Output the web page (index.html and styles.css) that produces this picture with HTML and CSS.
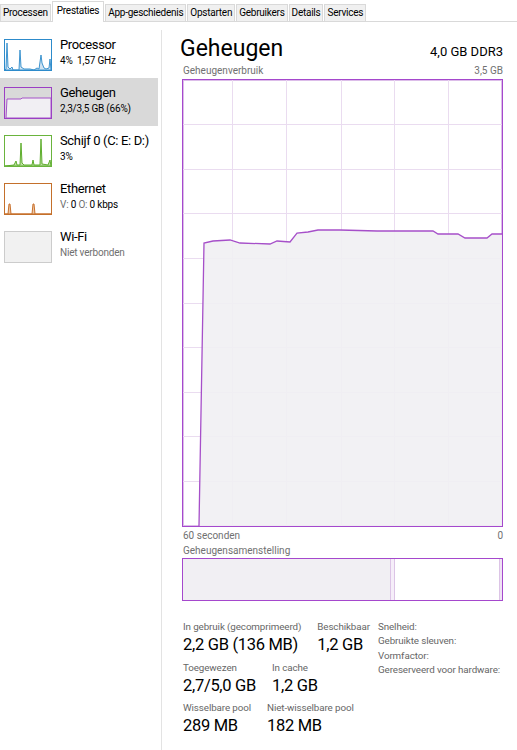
FILE: index.html
```html
<!DOCTYPE html>
<html lang="nl">
<head>
    <meta charset="UTF-8">
    <title>Taakbeheer - Prestaties</title>
    <link rel="stylesheet" href="styles.css">
</head>
<body>
    <div class="tabs">
        <div class="tab">Processen</div>
        <div class="tab active">Prestaties</div>
        <div class="tab">App-geschiedenis</div>
        <div class="tab">Opstarten</div>
        <div class="tab">Gebruikers</div>
        <div class="tab">Details</div>
        <div class="tab">Services</div>
    </div>

    <div class="main">
        <!-- resource list -->
        <div class="sidebar">
            <div class="item">
                <svg class="thumb" viewBox="0 0 48 32">
                    <path d="M1 31 L2 30 L3 4 L4 28 L6 30 L8 28 L9 31 L15 31 L16 11 L17 28 L20 30 L26 30 L30 31 L33 29 L35 30 L37 16 L38 24 L40 29 L42 30 L45 29 L46 20 L47 31 Z" fill="#cfe3f2" stroke="#3d94cf" stroke-width="1"/>
                    <rect x="0.5" y="0.5" width="47" height="31" fill="none" stroke="#2d8bcb"/>
                </svg>
                <div class="info">
                    <div class="name">Processor</div>
                    <div class="sub">4%&nbsp; 1,57 GHz</div>
                </div>
            </div>
            <div class="item selected">
                <svg class="thumb" viewBox="0 0 48 32">
                    <path d="M2 31 L3 12 L17 12 L18 11 L47 11 L47 31 Z" fill="#f1eff3" stroke="#a552c8" stroke-width="1"/>
                    <rect x="0.5" y="0.5" width="47" height="31" fill="none" stroke="#9b3fc4"/>
                </svg>
                <div class="info">
                    <div class="name">Geheugen</div>
                    <div class="sub">2,3/3,5 GB (66%)</div>
                </div>
            </div>
            <div class="item">
                <svg class="thumb" viewBox="0 0 48 32">
                    <path d="M1 31 L10 30 L12 26 L13 30 L16 30 L17 8 L18 28 L20 30 L28 30 L29 25 L30 30 L36 30 L37 4 L38 29 L44 30 L46 25 L47 31 Z" fill="#bfe0a6" stroke="#5fae2e" stroke-width="1"/>
                    <rect x="0.5" y="0.5" width="47" height="31" fill="none" stroke="#6ab43d"/>
                </svg>
                <div class="info">
                    <div class="name">Schijf 0 (C: E: D:)</div>
                    <div class="sub">3%</div>
                </div>
            </div>
            <div class="item">
                <svg class="thumb" viewBox="0 0 48 32">
                    <path d="M1 31 L4 31 L5 21 L6 21 L7 31 L28 31 L29 21 L30 21 L31 31 L47 31 Z" fill="#edc8a6" stroke="#c8702c" stroke-width="1"/>
                    <rect x="0.5" y="0.5" width="47" height="31" fill="none" stroke="#c4702b"/>
                </svg>
                <div class="info">
                    <div class="name">Ethernet</div>
                    <div class="sub"><span class="dim">V:</span> 0 <span class="dim">O:</span> 0 kbps</div>
                </div>
            </div>
            <div class="item">
                <svg class="thumb" viewBox="0 0 48 32">
                    <rect x="0.5" y="0.5" width="47" height="31" fill="#f1f1f1" stroke="#cccccc"/>
                </svg>
                <div class="info">
                    <div class="name">Wi-Fi</div>
                    <div class="sub muted">Niet verbonden</div>
                </div>
            </div>
        </div>

        <!-- memory details -->
        <div class="panel">
            <div class="header">
                <div class="title">Geheugen</div>
                <div class="spec">4,0 GB DDR3</div>
            </div>
            <div class="caption">
                <span>Geheugenverbruik</span>
                <span>3,5 GB</span>
            </div>
            <div class="chart">
                <svg viewBox="0 0 319 446" width="319" height="446">
                    <g stroke="#eadcf0" stroke-width="1">
                        <line x1="49.5" y1="0" x2="49.5" y2="446"/>
                        <line x1="103.5" y1="0" x2="103.5" y2="446"/>
                        <line x1="158.5" y1="0" x2="158.5" y2="446"/>
                        <line x1="211.5" y1="0" x2="211.5" y2="446"/>
                        <line x1="265.5" y1="0" x2="265.5" y2="446"/>
                        <line x1="0" y1="44.5" x2="319" y2="44.5"/>
                        <line x1="0" y1="89.5" x2="319" y2="89.5"/>
                        <line x1="0" y1="133.5" x2="319" y2="133.5"/>
                        <line x1="0" y1="178.5" x2="319" y2="178.5"/>
                        <line x1="0" y1="223.5" x2="319" y2="223.5"/>
                        <line x1="0" y1="267.5" x2="319" y2="267.5"/>
                        <line x1="0" y1="312.5" x2="319" y2="312.5"/>
                        <line x1="0" y1="356.5" x2="319" y2="356.5"/>
                        <line x1="0" y1="401.5" x2="319" y2="401.5"/>
                    </g>
                    <path d="M16 446 L21 163 L30 161 L47 160 L57 163 L87 164 L94 161 L107 162 L114 153 L125 152 L135 150 L157 150 L194 151 L250 151 L255 154 L275 154 L282 158 L304 158 L309 154 L319 154 L319 446 Z" fill="#f1eff3" fill-opacity="0.9"/>
                    <path d="M16 446 L21 163 L30 161 L47 160 L57 163 L87 164 L94 161 L107 162 L114 153 L125 152 L135 150 L157 150 L194 151 L250 151 L255 154 L275 154 L282 158 L304 158 L309 154 L319 154" fill="none" stroke="#a64fc9" stroke-width="1.3"/>
                </svg>
            </div>
            <div class="caption axis">
                <span>60 seconden</span>
                <span>0</span>
            </div>
            <div class="caption label">Geheugensamenstelling</div>
            <div class="composition">
                <div class="used"></div>
                <div class="modified"></div>
                <div class="standby"></div>
                <div class="free"></div>
            </div>

            <div class="stats">
                <div class="stat-groups">
                    <div class="stat-row">
                        <div class="stat">
                            <div class="stat-label">In gebruik (gecomprimeerd)</div>
                            <div class="stat-value">2,2 GB (136 MB)</div>
                        </div>
                        <div class="stat">
                            <div class="stat-label">Beschikbaar</div>
                            <div class="stat-value">1,2 GB</div>
                        </div>
                    </div>
                    <div class="stat-row">
                        <div class="stat">
                            <div class="stat-label">Toegewezen</div>
                            <div class="stat-value">2,7/5,0 GB</div>
                        </div>
                        <div class="stat">
                            <div class="stat-label">In cache</div>
                            <div class="stat-value">1,2 GB</div>
                        </div>
                    </div>
                    <div class="stat-row">
                        <div class="stat">
                            <div class="stat-label">Wisselbare pool</div>
                            <div class="stat-value">289 MB</div>
                        </div>
                        <div class="stat">
                            <div class="stat-label">Niet-wisselbare pool</div>
                            <div class="stat-value">182 MB</div>
                        </div>
                    </div>
                </div>
                <div class="props">
                    <div>Snelheid:</div>
                    <div>Gebruikte sleuven:</div>
                    <div>Vormfactor:</div>
                    <div>Gereserveerd voor hardware:</div>
                </div>
            </div>
        </div>
    </div>
</body>
</html>
```

FILE: styles.css
```css
body {
    font-family: Roboto, "Open Sans", sans-serif;
    background-color: #fff;
    color: #000;
    margin: 0;
    padding: 0;
    width: 517px;
    height: 750px;
    overflow: hidden;
}

/* tab strip */
.tabs {
    display: flex;
    align-items: flex-end;
    height: 22px;
    border-bottom: 1px solid #d9d9d9;
    box-sizing: border-box;
}

.tab {
    height: 16px;
    line-height: 15px;
    font-size: 10px;
    letter-spacing: -0.25px;
    padding: 0 2px;
    margin-right: 1px;
    background-color: #f0f0f0;
    border: 1px solid #d9d9d9;
    border-bottom: none;
    white-space: nowrap;
}

.tab.active {
    height: 20px;
    line-height: 17px;
    background-color: #fff;
    position: relative;
    top: 1px;
    padding: 0 4px;
}

.main {
    display: flex;
    height: 728px;
}

/* left column */
.sidebar {
    width: 162px;
    margin-top: 8px;
    border-right: 1px solid #e3e3e3;
    box-sizing: border-box;
}

.item {
    display: flex;
    height: 48px;
    width: 158px;
}

.item.selected {
    background-color: #d9d9d9;
}

.thumb {
    width: 48px;
    height: 32px;
    margin: 9px 0 0 4px;
    flex-shrink: 0;
}

.info {
    margin-left: 8px;
    padding-top: 6px;
    white-space: nowrap;
}

.name {
    font-size: 13px;
    letter-spacing: -0.35px;
    line-height: 18px;
}

.sub {
    font-size: 10px;
    letter-spacing: -0.2px;
    line-height: 13px;
}

.sub.muted,
.dim {
    color: #707070;
}

/* right panel */
.panel {
    flex: 1;
    padding: 12px 14px 0 20px;
}

.header {
    display: flex;
    justify-content: space-between;
    align-items: baseline;
}

.title {
    font-size: 23px;
    line-height: 30px;
    margin-left: -2px;
}

.spec {
    font-size: 13px;
}

.caption {
    display: flex;
    justify-content: space-between;
    font-size: 10px;
    line-height: 13px;
    color: #707070;
    padding-left: 1px;
}

.chart {
    width: 319px;
    height: 446px;
    border: 1px solid #a548cd;
    box-shadow: inset 0 0 0 1px #dcbde9;
    margin-top: 2px;
}

.chart svg {
    display: block;
}

.caption.axis {
    margin-top: 2px;
}

.caption.label {
    margin-top: 2px;
}

.composition {
    display: flex;
    height: 41px;
    width: 319px;
    border: 1px solid #a548cd;
    margin-top: 1px;
}

.used {
    width: 207px;
    background-color: #f1eff3;
}

.modified {
    width: 3px;
    border-left: 1px solid #dcc4e6;
    border-right: 1px solid #dcc4e6;
    background-color: #f6eef9;
}

.standby {
    flex: 1;
}

.free {
    width: 2px;
    border-left: 1px solid #dcc4e6;
    background-color: #efe2f4;
}

/* numbers below the charts */
.stats {
    display: flex;
    margin-top: 19px;
    padding-left: 1px;
}

.stat-groups {
    width: 195px;
}

.stat-row {
    display: flex;
    gap: 16px;
    margin-bottom: 3.5px;
    white-space: nowrap;
}

.stat-label {
    font-size: 9.8px;
    letter-spacing: -0.1px;
    line-height: 13px;
    color: #666;
}

.stat-value {
    font-size: 16.5px;
    letter-spacing: -0.3px;
    line-height: 24px;
}

.props {
    font-size: 9.8px;
    letter-spacing: -0.1px;
    line-height: 14.3px;
    color: #666;
    white-space: nowrap;
}
```
